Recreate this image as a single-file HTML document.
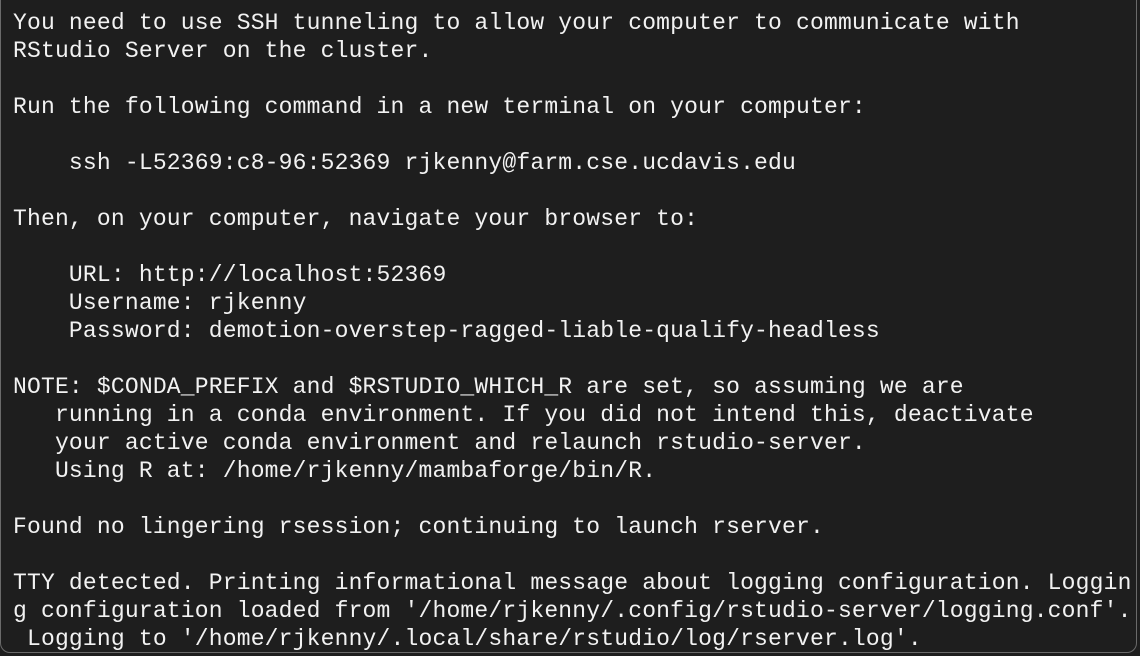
<!DOCTYPE html>
<html><head><style>
html,body{margin:0;padding:0;background:#1e1e1e;}
.w{position:absolute;left:0;top:-4px;width:1137px;height:657px;border:1.5px solid #6a6a6a;border-top:none;border-radius:0 0 10px 10px;background:#1e1e1e;box-sizing:border-box;overflow:hidden}
pre{margin:0;position:absolute;left:12px;top:13px;font-family:"Liberation Mono",monospace;font-size:23px;line-height:28px;color:#f2f2f2;letter-spacing:0.18px}
</style></head><body><div class="w"><pre>You need to use SSH tunneling to allow your computer to communicate with
RStudio Server on the cluster.

Run the following command in a new terminal on your computer:

    ssh -L52369:c8-96:52369 rjkenny@farm.cse.ucdavis.edu

Then, on your computer, navigate your browser to:

    URL: http://localhost:52369
    Username: rjkenny
    Password: demotion-overstep-ragged-liable-qualify-headless

NOTE: $CONDA_PREFIX and $RSTUDIO_WHICH_R are set, so assuming we are
   running in a conda environment. If you did not intend this, deactivate
   your active conda environment and relaunch rstudio-server.
   Using R at: /home/rjkenny/mambaforge/bin/R.

Found no lingering rsession; continuing to launch rserver.

TTY detected. Printing informational message about logging configuration. Loggin
g configuration loaded from '/home/rjkenny/.config/rstudio-server/logging.conf'.
 Logging to '/home/rjkenny/.local/share/rstudio/log/rserver.log'.</pre></div></body></html>
